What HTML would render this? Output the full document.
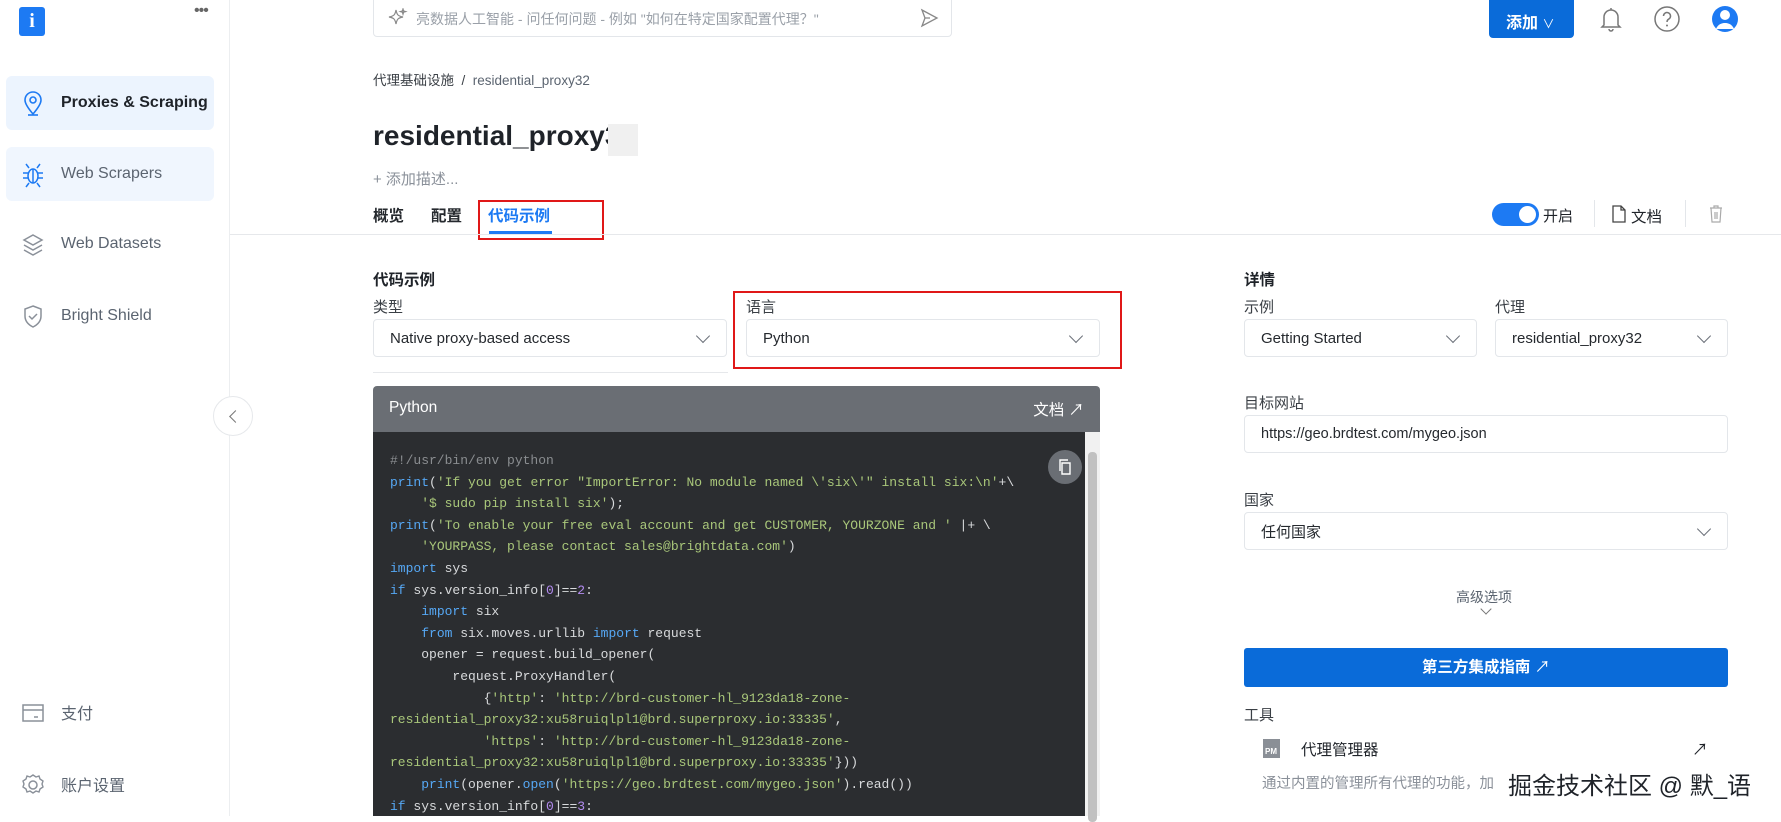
<!DOCTYPE html>
<html><head><meta charset="utf-8">
<style>
*{box-sizing:border-box;margin:0;padding:0}
body{width:1781px;height:816px;overflow:hidden;background:#fff;font-family:"Liberation Sans","Noto Sans CJK SC",sans-serif;color:#1f2329;position:relative}
.a{position:absolute}
.side{left:0;top:0;width:230px;height:816px;border-right:1px solid #eceef0}
.nav{position:absolute;left:6px;width:208px;height:54px;border-radius:6px;display:flex;align-items:center;padding-left:55px;font-size:16px;color:#5b6470}
.nav svg{position:absolute;left:15px;top:15px}
.sel{position:absolute;border:1px solid #e3e6ea;border-radius:4px;height:38px;font-size:15px;color:#25292e;display:flex;align-items:center;padding-left:16px}
.sel:after{content:"";position:absolute;right:18px;top:11px;width:9px;height:9px;border-right:1.3px solid #6b7079;border-bottom:1.3px solid #6b7079;transform:rotate(45deg)}
.sel.noarrow:after{display:none}
.lbl{position:absolute;font-size:15px;color:#3a3f45}
.code{font-family:"Liberation Mono",monospace;font-size:13px;color:#d8dadc;line-height:21.6px;white-space:pre}
.k{color:#56a8f5}.s{color:#a9c77a}.c{color:#8a8d90}.n{color:#b38cf0}
</style></head><body>
<div class="a side">
  <div class="a" style="left:19px;top:7px;width:26px;height:29px;background:#1d7af3;border-radius:3px;color:#fff;font:bold 20px 'Liberation Serif',serif;text-align:center;line-height:29px">i</div>
  <div class="a" style="left:194px;top:2px;font-size:16px;color:#666;letter-spacing:-1px">•••</div>
  <div class="nav" style="top:76px;background:#ecf4fe;color:#1f2329;font-weight:bold">
    <svg width="24" height="26" viewBox="0 0 24 26"><path d="M12 23C6 16 4 12 4 9a8 8 0 0116 0c0 3-2 7-8 14z" fill="none" stroke="#1d7af3" stroke-width="1.6"/><circle cx="12" cy="9" r="3" fill="none" stroke="#1d7af3" stroke-width="1.6"/><path d="M7 24h10" stroke="#1d7af3" stroke-width="1.6"/></svg>Proxies &amp; Scraping</div>
  <div class="nav" style="top:147px;background:#f0f6fe">
    <svg width="24" height="26" viewBox="0 0 24 26"><ellipse cx="12" cy="14" rx="5" ry="7" fill="none" stroke="#1d7af3" stroke-width="1.5"/><path d="M12 7v14M7 11H2M7 16H2M17 11h5M17 16h5M8 6L5 2M16 6l3-4M8 21l-3 4M16 21l3 4" stroke="#1d7af3" stroke-width="1.5" fill="none"/></svg>Web Scrapers</div>
  <div class="nav" style="top:217px">
    <svg width="24" height="26" viewBox="0 0 24 26"><path d="M12 3l9 5-9 5-9-5z M3 13l9 5 9-5 M3 18l9 5 9-5" fill="none" stroke="#8a9099" stroke-width="1.5"/></svg>Web Datasets</div>
  <div class="nav" style="top:289px">
    <svg width="24" height="26" viewBox="0 0 24 26"><path d="M12 2l8 3v7c0 6-4 9-8 11-4-2-8-5-8-11V5z" fill="none" stroke="#8a9099" stroke-width="1.5"/><path d="M8 12l3 3 5-5" fill="none" stroke="#8a9099" stroke-width="1.5"/></svg>Bright Shield</div>
  <div class="nav" style="top:685px">
    <svg width="24" height="26" viewBox="0 0 24 26"><rect x="2" y="5" width="20" height="16" fill="none" stroke="#8a9099" stroke-width="1.5"/><path d="M2 10h20M13 17h4" stroke="#8a9099" stroke-width="1.5"/></svg>支付</div>
  <div class="nav" style="top:757px">
    <svg width="24" height="26" viewBox="0 0 24 26"><circle cx="12" cy="13" r="4" fill="none" stroke="#8a9099" stroke-width="1.5"/><path d="M12 3l3 2 3-1 1 3 3 2-1 3 1 3-3 2-1 3-3-1-3 2-3-2-3 1-1-3-3-2 1-3-1-3 3-2 1-3 3 1z" fill="none" stroke="#8a9099" stroke-width="1.4"/></svg>账户设置</div>
</div>
<div class="a" style="left:213px;top:396px;width:40px;height:40px;border-radius:50%;border:1px solid #e6e8eb;background:#fff"><div class="a" style="left:17px;top:15px;width:9px;height:9px;border-left:1.4px solid #777;border-bottom:1.4px solid #777;transform:rotate(45deg)"></div></div>

<div class="a" style="left:373px;top:-1px;width:579px;height:38px;border:1px solid #e3e6ea;border-radius:0 0 4px 4px;font-size:14px;color:#9aa0a8;padding:9px 0 0 42px">亮数据人工智能 - 问任何问题 - 例如 "如何在特定国家配置代理？"
  <svg class="a" style="left:14px;top:8px" width="20" height="20" viewBox="0 0 20 20"><path d="M8 2c1 5 2 6 7 7-5 1-6 2-7 7-1-5-2-6-7-7 5-1 6-2 7-7z M15 1l.6 2 2 .6-2 .6-.6 2-.6-2-2-.6 2-.6z" fill="none" stroke="#888" stroke-width="1.2"/></svg>
  <svg class="a" style="left:545px;top:8px" width="20" height="20" viewBox="0 0 20 20"><path d="M3 2l15 8-15 8 3-8z M6 10h5" fill="none" stroke="#888" stroke-width="1.3"/></svg>
</div>
<div class="a" style="left:1489px;top:0;width:85px;height:38px;background:#0a6bd9;border-radius:0 0 4px 4px;color:#fff;font-weight:bold;font-size:16px;padding:9px 0 0 17px">添加 <span style="font-weight:normal;font-size:12px">∨</span></div>
<svg class="a" style="left:1598px;top:5px" width="26" height="28" viewBox="0 0 26 28"><path d="M6 20V12a7 7 0 0114 0v8l2 2H4z M11 24a2 2 0 004 0 M13 3v2" fill="none" stroke="#777" stroke-width="1.5"/></svg>
<svg class="a" style="left:1653px;top:5px" width="28" height="28" viewBox="0 0 28 28"><circle cx="14" cy="14" r="12" fill="none" stroke="#777" stroke-width="1.5"/><path d="M10.5 11a3.5 3.5 0 116 2.5c-1.5 1-2.5 1.5-2.5 3.5" fill="none" stroke="#777" stroke-width="1.5"/><circle cx="14" cy="20.5" r="1" fill="#777"/></svg>
<svg class="a" style="left:1711px;top:4px" width="28" height="30" viewBox="0 0 28 30"><circle cx="14" cy="15" r="13" fill="#1d7af3"/><circle cx="14" cy="11" r="5" fill="#fff"/><path d="M5 25c2-5 6-6 9-6s7 1 9 6" fill="#fff"/></svg>

<div class="a" style="left:373px;top:69px;font-size:13.5px;color:#3a3f45">代理基础设施 &nbsp;/&nbsp; <span style="color:#5b6470">residential_proxy32</span></div>
<div class="a" style="left:373px;top:120px;font-size:28px;font-weight:bold;color:#1f2329">residential_proxy3</div>
<div class="a" style="left:608px;top:124px;width:30px;height:32px;background:#f0f0f0"></div>
<div class="a" style="left:373px;top:168px;font-size:15px;color:#8a9099">+ 添加描述...</div>
<div class="a" style="left:373px;top:204px;font-size:15.5px;font-weight:bold;color:#25292e">概览</div>
<div class="a" style="left:431px;top:204px;font-size:15.5px;font-weight:bold;color:#25292e">配置</div>
<div class="a" style="left:488px;top:204px;font-size:15.5px;font-weight:bold;color:#1d7af3">代码示例</div>
<div class="a" style="left:489px;top:231px;width:63px;height:3px;background:#1d7af3"></div>
<div class="a" style="left:478px;top:200px;width:126px;height:40px;border:2px solid #e01818"></div>
<div class="a" style="left:230px;top:234px;width:1551px;height:1px;background:#e6e8eb"></div>

<div class="a" style="left:1492px;top:203px;width:47px;height:23px;border-radius:12px;background:#1d7af3"><div class="a" style="right:3px;top:3px;width:17px;height:17px;border-radius:50%;background:#fff"></div></div>
<div class="a" style="left:1543px;top:205px;font-size:15px">开启</div>
<div class="a" style="left:1594px;top:200px;width:1px;height:27px;background:#e3e6ea"></div>
<svg class="a" style="left:1612px;top:205px" width="14" height="18" viewBox="0 0 14 18"><path d="M1 1h8l4 4v12H1z M9 1v4h4" fill="none" stroke="#444" stroke-width="1.3"/></svg>
<div class="a" style="left:1631px;top:205px;font-size:15.5px">文档</div>
<div class="a" style="left:1685px;top:200px;width:1px;height:27px;background:#e3e6ea"></div>
<svg class="a" style="left:1709px;top:205px" width="14" height="18" viewBox="0 0 14 18"><path d="M1 3h12M5 3V1h4v2M2 3l1 14h8l1-14M6 7v7M8 7v7" fill="none" stroke="#aaa" stroke-width="1.2"/></svg>

<div class="a" style="left:373px;top:268px;font-size:15.5px;font-weight:bold">代码示例</div>
<div class="lbl" style="left:373px;top:296px">类型</div>
<div class="lbl" style="left:746px;top:296px">语言</div>
<div class="sel" style="left:373px;top:319px;width:354px">Native proxy-based access</div>
<div class="sel" style="left:746px;top:319px;width:354px">Python</div>
<div class="a" style="left:733px;top:291px;width:389px;height:78px;border:2.5px solid #e01818"></div>
<div class="a" style="left:373px;top:372px;width:355px;height:1px;background:#e6e8eb"></div>

<div class="a" style="left:373px;top:386px;width:727px;height:46px;background:#6a6e74;border-radius:4px 4px 0 0;color:#fff;font-size:15.5px;padding:13px 0 0 16px">Python<span class="a" style="right:16px;top:12px">文档 ↗</span></div>
<div class="a" style="left:373px;top:432px;width:727px;height:384px;background:#2b2d30"></div>
<div class="a" style="left:1085px;top:432px;width:15px;height:384px;background:#f1f1f1"><div class="a" style="left:3px;top:20px;width:9px;height:370px;background:#c1c1c1;border-radius:4px"></div></div>
<div class="a" style="left:1048px;top:450px;width:34px;height:34px;border-radius:50%;background:#6a6e74"><svg class="a" style="left:9px;top:8px" width="16" height="18" viewBox="0 0 16 18"><path d="M5 5h8v11H5z M3 13V2h8" fill="none" stroke="#fff" stroke-width="1.4"/></svg></div>
<div class="a code" style="left:390px;top:450px"><span class="c">#!/usr/bin/env python</span>
<span class="k">print</span>(<span class="s">'If you get error "ImportError: No module named \'six\'" install six:\n'</span>+\
    <span class="s">'$ sudo pip install six'</span>);
<span class="k">print</span>(<span class="s">'To enable your free eval account and get CUSTOMER, YOURZONE and '</span> |+ \
    <span class="s">'YOURPASS, please contact sales@brightdata.com'</span>)
<span class="k">import</span> sys
<span class="k">if</span> sys.version_info[<span class="n">0</span>]==<span class="n">2</span>:
    <span class="k">import</span> six
    <span class="k">from</span> six.moves.urllib <span class="k">import</span> request
    opener = request.build_opener(
        request.ProxyHandler(
            {<span class="s">'http'</span>: <span class="s">'http://brd-customer-hl_9123da18-zone-</span>
<span class="s">residential_proxy32:xu58ruiqlpl1@brd.superproxy.io:33335'</span>,
            <span class="s">'https'</span>: <span class="s">'http://brd-customer-hl_9123da18-zone-</span>
<span class="s">residential_proxy32:xu58ruiqlpl1@brd.superproxy.io:33335'</span>}))
    <span class="k">print</span>(opener.<span class="k">open</span>(<span class="s">'https://geo.brdtest.com/mygeo.json'</span>).read())
<span class="k">if</span> sys.version_info[<span class="n">0</span>]==<span class="n">3</span>:</div>

<div class="a" style="left:1244px;top:268px;font-size:15.5px;font-weight:bold">详情</div>
<div class="lbl" style="left:1244px;top:296px">示例</div>
<div class="lbl" style="left:1495px;top:296px">代理</div>
<div class="sel" style="left:1244px;top:319px;width:233px">Getting Started</div>
<div class="sel" style="left:1495px;top:319px;width:233px">residential_proxy32</div>
<div class="lbl" style="left:1244px;top:392px">目标网站</div>
<div class="sel noarrow" style="left:1244px;top:415px;width:484px;font-size:14.5px">https://geo.brdtest.com/mygeo.json</div>
<div class="lbl" style="left:1244px;top:489px">国家</div>
<div class="sel" style="left:1244px;top:512px;width:484px">任何国家</div>
<div class="a" style="left:1456px;top:587px;font-size:14px;color:#5b6470">高级选项</div>
<div class="a" style="left:1482px;top:605px;width:8px;height:8px;border-right:1.2px solid #777;border-bottom:1.2px solid #777;transform:rotate(45deg)"></div>
<div class="a" style="left:1244px;top:648px;width:484px;height:39px;background:#0a6bd9;border-radius:3px;color:#fff;font-weight:bold;font-size:15.5px;text-align:center;line-height:39px">第三方集成指南 <span style="font-weight:normal">↗</span></div>
<div class="lbl" style="left:1244px;top:704px">工具</div>
<div class="a" style="left:1263px;top:739px;width:17px;height:19px;background:#8a8f96;color:#fff;font-size:8px;font-weight:bold;padding:8px 0 0 2px">PM</div>
<div class="a" style="left:1301px;top:738px;font-size:15.5px">代理管理器</div>
<div class="a" style="left:1692px;top:736px;font-size:16px">↗</div>
<div class="a" style="left:1262px;top:772px;font-size:14.5px;color:#8a9099">通过内置的管理所有代理的功能，加</div>
<div class="a" style="left:1508px;top:766px;font-size:24px;color:#1f2329;text-shadow:0 0 2px #fff">掘金技术社区 @ 默_语</div>
</body></html>
